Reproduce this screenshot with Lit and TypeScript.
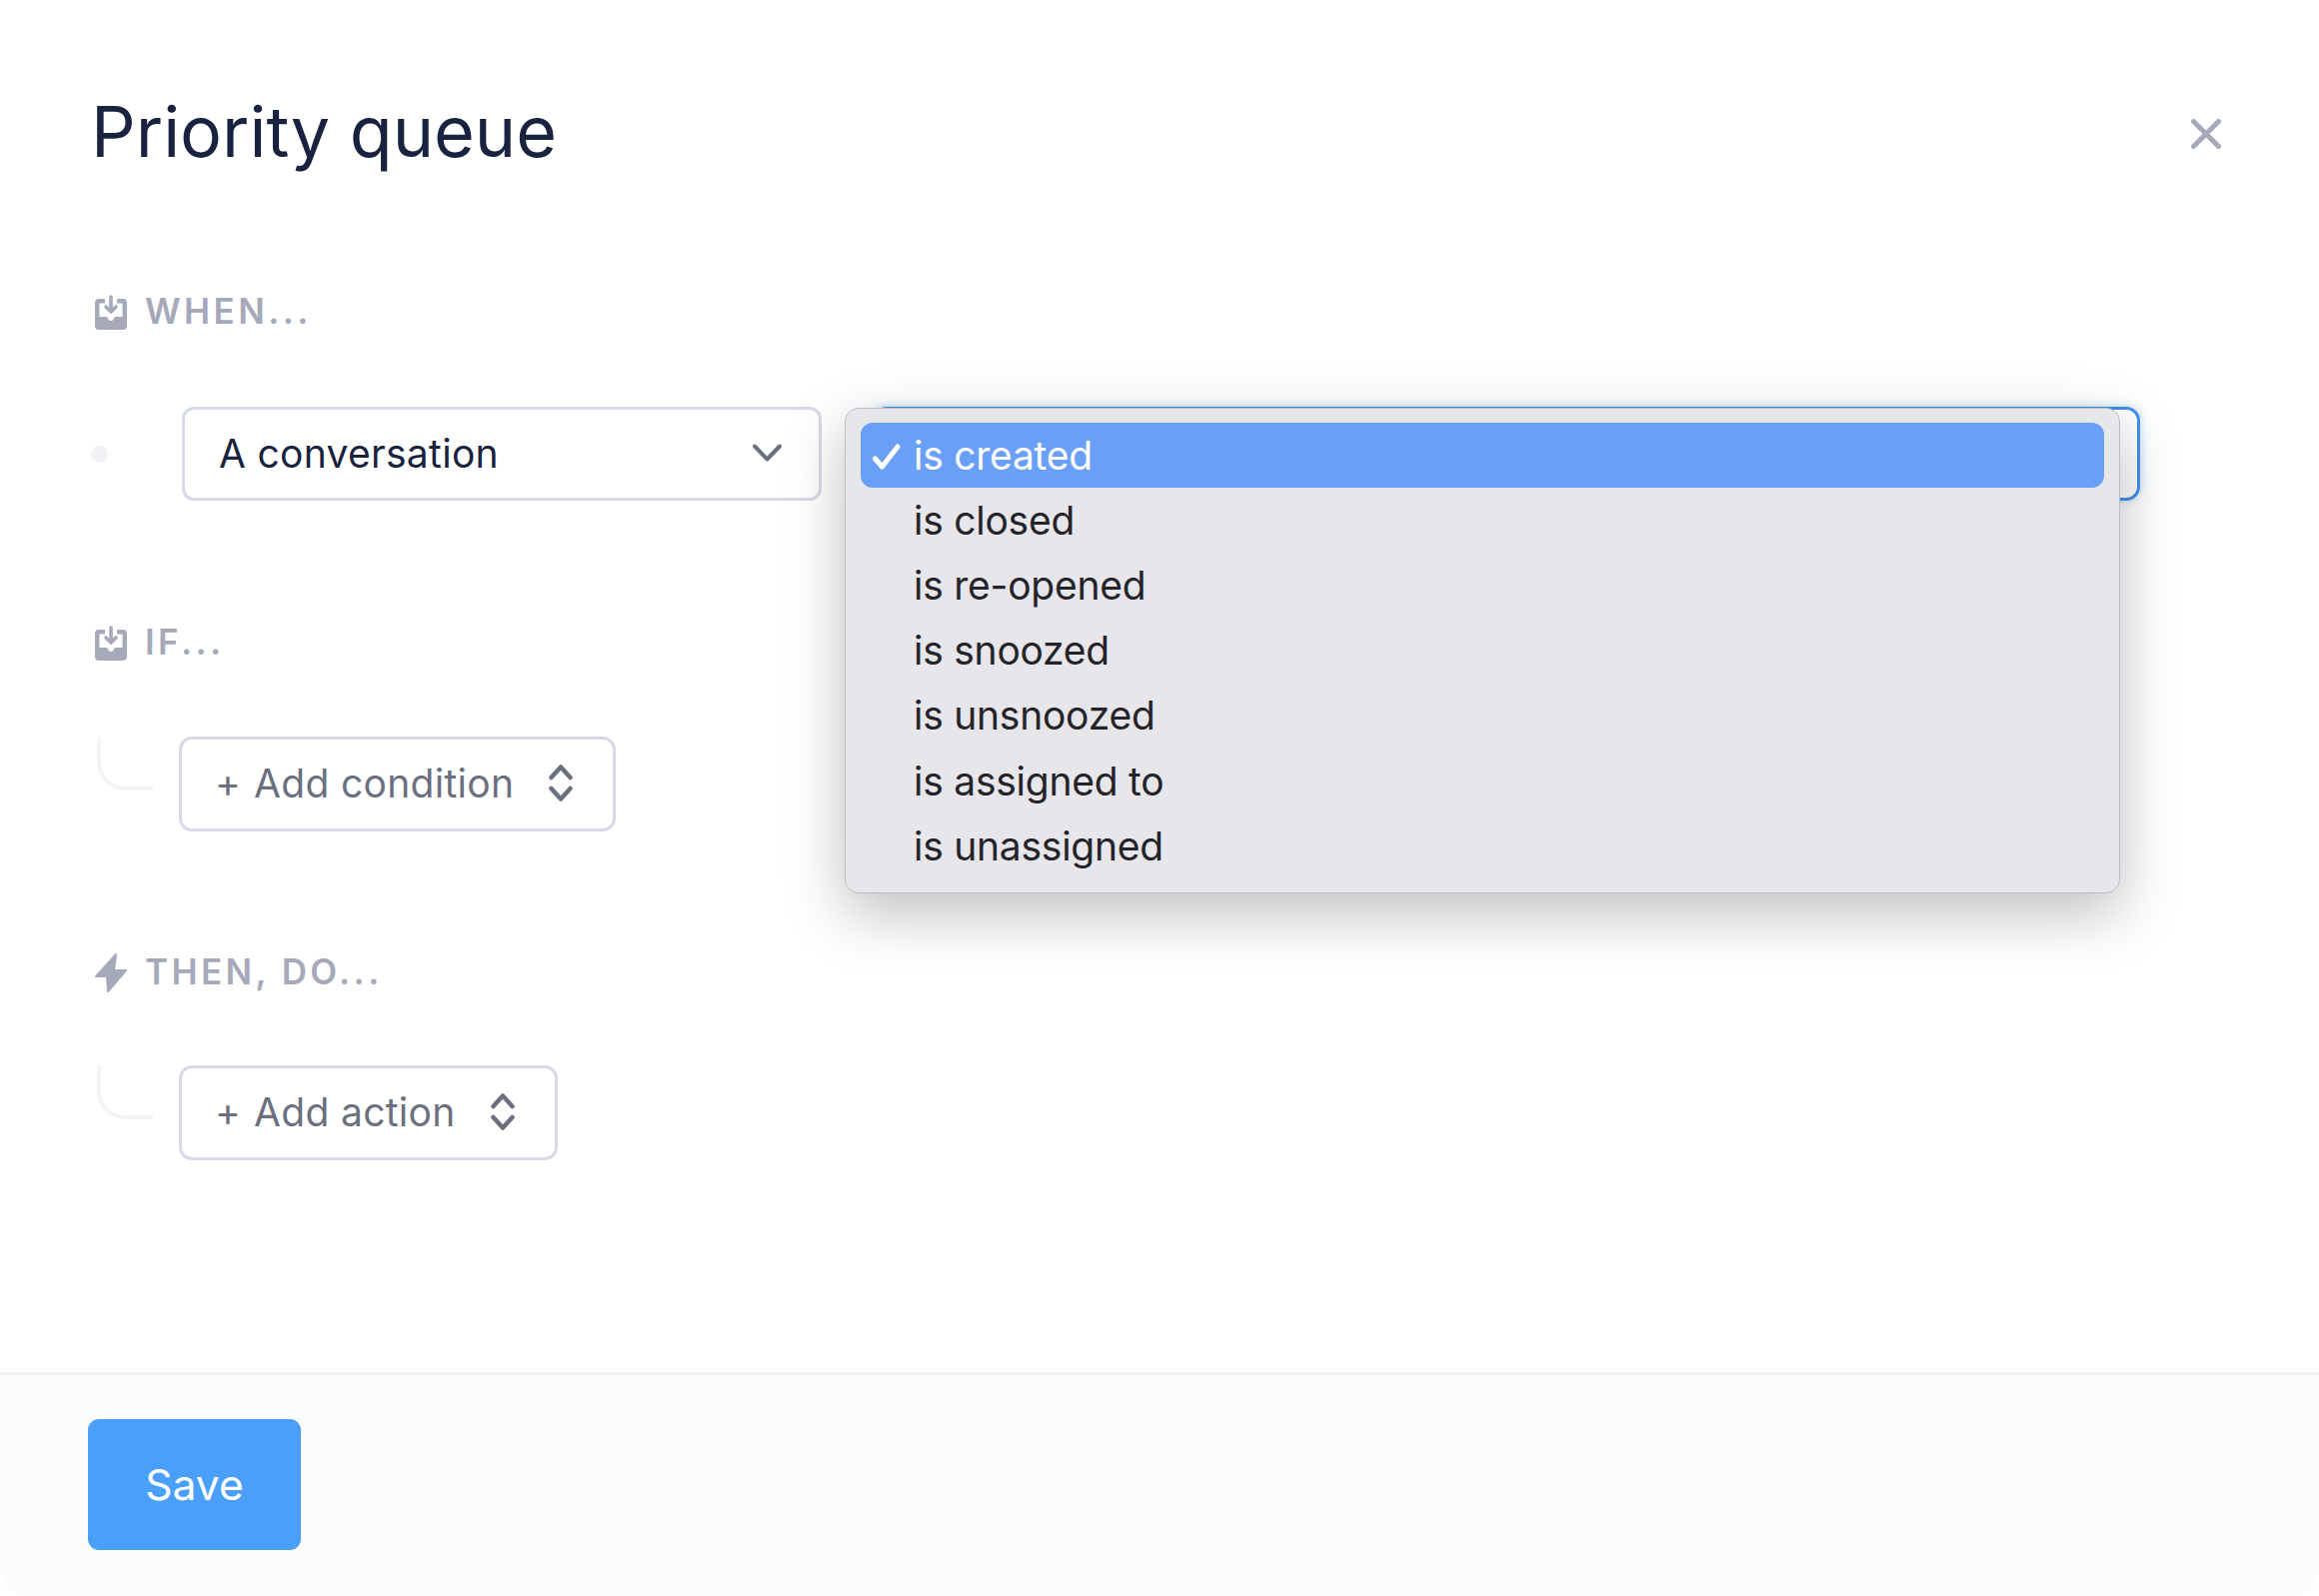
import { LitElement, html, css, svg } from "lit";
import { customElement } from "lit/decorators.js";

const inboxIcon = html`<svg class="head-icon" width="32" height="35" viewBox="0 0 32 35" aria-hidden="true">
  <path fill="#a5a9b9" d="M4 4h6v4.500H4.500v13.500H11c1 0 1.500.5 2 1.500.5 1.500 1.500 2.500 3 2.500s2.500-1 3-2.500c.5-1 1-1.500 2-1.500h6.500V8.500H22V4h6a4 4 0 0 1 4 4v23a4 4 0 0 1-4 4H4a4 4 0 0 1-4-4V8a4 4 0 0 1 4-4z"/>
  <path fill="none" stroke="#a5a9b9" stroke-width="3.600" stroke-linecap="round" stroke-linejoin="round" d="M16 2v14M11 12l5 5 5-5"/>
</svg>`;

const boltIcon = html`<svg class="head-icon" width="32" height="39" viewBox="0 0 32 39" aria-hidden="true">
  <path fill="#a5a9b9" stroke="#a5a9b9" stroke-width="2" stroke-linejoin="round" d="M21 1 1 23h11l1 15 18-21H19z"/>
</svg>`;

const upDown = html`<svg class="updown" width="24" height="39" viewBox="0 0 24 39" aria-hidden="true">
  <path fill="none" stroke="#6b7080" stroke-width="4.500" stroke-linecap="round" stroke-linejoin="round" d="M2.500 14 12 3.500l9.500 10.500M2.500 25 12 35.500 21.500 25"/>
</svg>`;

const OPTIONS = ["is created", "is closed", "is re-opened", "is snoozed", "is unsnoozed", "is assigned to", "is unassigned"];

@customElement("app-root")
export class AppRoot extends LitElement {
  static styles = css`
    :host {
      display: block;
      width: 2320px;
      height: 1597px;
      background: #fff;
      font-family: Inter, "Liberation Sans", sans-serif;
      overflow: hidden;
    }
    .modal {
      height: 1597px;
      display: flex;
      flex-direction: column;
      border-radius: 30px;
      overflow: hidden;
      background: #fff;
    }
    .main {
      flex: 1;
      padding: 0 88px;
      position: relative;
    }
    .title-row {
      height: 291px;
      display: flex;
      justify-content: space-between;
      align-items: flex-start;
    }
    h1 {
      margin: 92px 0 0 3px;
      font-size: 70px;
      line-height: 80px;
      font-weight: 400;
      color: #18233f;
    }
    .close {
      margin: 119px 10px 0 0;
      display: block;
    }
    .head {
      height: 40px;
      display: flex;
      align-items: center;
      padding-left: 7px;
      gap: 18px;
      font-size: 35px;
      font-weight: 600;
      letter-spacing: 3.4px;
      color: #a5a9b9;
    }
    .head-icon { flex: none; margin-top: 3px; }
    .row {
      display: flex;
      align-items: flex-start;
    }
    .row-when {
      margin-top: 76px;
      height: 94px;
      align-items: center;
    }
    .dot {
      width: 17px;
      height: 17px;
      border-radius: 50%;
      background: #f1f2f5;
      margin: 0 74px 0 3px;
      flex: none;
    }
    .select {
      box-sizing: border-box;
      width: 640px;
      height: 94px;
      border: 3px solid #d6d9e8;
      border-radius: 12px;
      display: flex;
      align-items: center;
      justify-content: space-between;
      padding: 0 37px 2px 34px;
      font-size: 39px;
      letter-spacing: 0.3px;
      color: #18233f;
      flex: none;
      background: #fff;
    }
    .select2 {
      position: relative;
      margin-left: 51px;
      box-sizing: border-box;
      width: 1268px;
      height: 94px;
      border: 3px solid #3f92ea;
      border-radius: 14px;
      box-shadow: 0 0 10px rgba(63, 146, 234, 0.35);
      background: #fff;
      flex: none;
    }
    .menu {
      position: absolute;
      left: -31px;
      top: -2px;
      box-sizing: border-box;
      width: 1276px;
      height: 486px;
      padding: 14px 15px;
      background: #e6e6eb;
      border: 1px solid #bcbcc0;
      border-radius: 14px;
      box-shadow: 0 20px 60px rgba(0, 0, 0, 0.26);
      z-index: 2;
    }
    .opt {
      height: 65.1px;
      border-radius: 12px;
      display: flex;
      align-items: center;
      padding-left: 53px;
      position: relative;
      font-size: 39px;
      letter-spacing: -0.25px;
      color: #232328;
    }
    .opt.sel {
      background: #6a9ff8;
      color: #fff;
    }
    .check {
      position: absolute;
      left: 12px;
      top: 21px;
    }
    .if-head { margin-top: 121px; }
    .then-head { margin-top: 120px; }
    .row-add { margin-top: 75px; }
    .row-add.last { margin-top: 74px; }
    .curve {
      box-sizing: border-box;
      width: 56px;
      height: 54px;
      margin: 0 26px 0 9px;
      border-left: 4px solid #f3f4f6;
      border-bottom: 4px solid #f3f4f6;
      border-bottom-left-radius: 28px;
      flex: none;
    }
    .add {
      box-sizing: border-box;
      height: 95px;
      border: 3px solid #d6d9e8;
      border-radius: 13px;
      display: flex;
      align-items: center;
      padding: 0 40px 2px 33px;
      gap: 35px;
      font-size: 39px;
      letter-spacing: 0.3px;
      color: #6b7080;
      background: #fff;
    }
    .plus { margin-right: 13px; }
    .footer {
      height: 224px;
      box-sizing: border-box;
      border-top: 3px solid #eef0f5;
      background: #fafbfd;
      padding: 44px 88px 0;
    }
    .save {
      display: flex;
      align-items: center;
      justify-content: center;
      width: 213px;
      height: 131px;
      border: none;
      border-radius: 11px;
      background: #4a9ffa;
      color: #fff;
      font-family: inherit;
      font-size: 42.5px;
      padding: 0;
    }
  `;

  render() {
    return html`
      <div class="modal">
        <div class="main">
          <div class="title-row">
            <h1>Priority queue</h1>
            <svg class="close" width="30" height="30" viewBox="0 0 30 30" aria-hidden="true">
              <path fill="none" stroke="#a5a9b9" stroke-width="5" stroke-linecap="round" d="M2.500 2.500l25 25M27.500 2.500l-25 25"/>
            </svg>
          </div>

          <div class="head">${inboxIcon}<span>WHEN...</span></div>
          <div class="row row-when">
            <span class="dot"></span>
            <div class="select">
              <span>A conversation</span>
              <svg width="29" height="18" viewBox="0 0 29 18" aria-hidden="true">
                <path fill="none" stroke="#6b7080" stroke-width="4" stroke-linecap="round" stroke-linejoin="round" d="M2 2.500l12.500 13 12.500-13"/>
              </svg>
            </div>
            <div class="select2">
              <div class="menu">
                ${OPTIONS.map(
                  (o, i) => html`<div class="opt ${i === 0 ? "sel" : ""}">
                    ${i === 0
                      ? html`<svg class="check" width="28" height="26" viewBox="0 0 28 26" aria-hidden="true">
                          ${svg`<path fill="none" stroke="#fff" stroke-width="5" stroke-linecap="round" stroke-linejoin="round" d="M2.500 15l7 8L25 3"/>`}
                        </svg>`
                      : ""}
                    <span>${o}</span>
                  </div>`
                )}
              </div>
            </div>
          </div>

          <div class="head if-head">${inboxIcon}<span>IF...</span></div>
          <div class="row row-add">
            <span class="curve"></span>
            <div class="add"><span><span class="plus">+</span>Add condition</span>${upDown}</div>
          </div>

          <div class="head then-head">${boltIcon}<span>THEN, DO...</span></div>
          <div class="row row-add last">
            <span class="curve"></span>
            <div class="add"><span><span class="plus">+</span>Add action</span>${upDown}</div>
          </div>
        </div>
        <div class="footer"><button class="save">Save</button></div>
      </div>
    `;
  }
}
